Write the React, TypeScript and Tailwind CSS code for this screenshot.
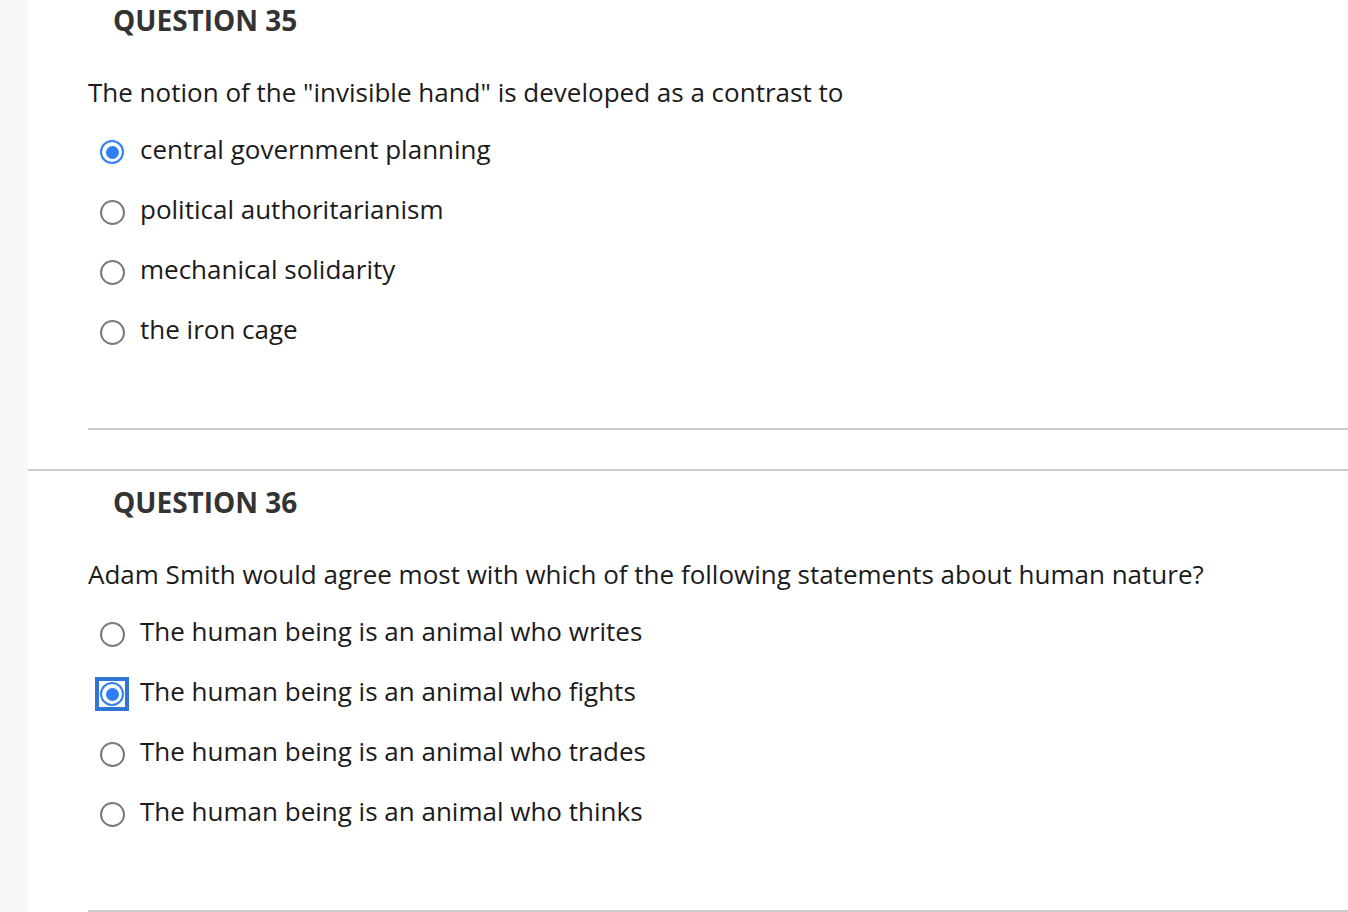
import React from "react";

type Opt = { label: string; checked?: boolean; focused?: boolean };

const Radio = ({ checked, focused }: { checked?: boolean; focused?: boolean }) => {
  const inner = checked ? (
    <span className="flex h-[24px] w-[24px] items-center justify-center rounded-full border-[2px] border-[#2f7ef6] bg-white">
      <span className="h-[13px] w-[13px] rounded-full bg-[#2f7ef6]" />
    </span>
  ) : (
    <span className="block h-[25px] w-[25px] rounded-full border-[2px] border-[#7a7a7a] bg-white" />
  );
  if (focused) {
    return (
      <span className="mt-[6px] flex h-[34px] w-[34px] items-center justify-center border-[4px] border-[#2f75d6] bg-white">
        {inner}
      </span>
    );
  }
  return <span className="mt-[6px] flex h-[34px] w-[34px] items-center justify-center">{inner}</span>;
};

const Question = ({ num, text, options }: { num: number; text: string; options: Opt[] }) => (
  <section className="border-t-2 border-[#cdcdcd]">
    <h2 className="mt-[12px] pl-[85px] text-[28px] font-bold leading-[38px] text-[#333333]">
      QUESTION {num}
    </h2>
    <p className="mt-[34px] pl-[60px] text-[26px] leading-[38px] text-[#1b1b1b]">{text}</p>
    <ul className="mt-[8px]">
      {options.map((o) => (
        <li key={o.label} className="flex h-[60px] items-center pl-[67px]">
          <Radio checked={o.checked} focused={o.focused} />
          <span className="ml-[11px] text-[26px] leading-[38px] text-[#1b1b1b]">{o.label}</span>
        </li>
      ))}
    </ul>
    <div className="ml-[60px] mt-[69px] h-[2px] bg-[#cdcdcd]" />
    <div className="h-[39px]" />
  </section>
);

export default function App() {
  return (
    <div
      className="flex h-[912px] w-[1348px] overflow-hidden bg-white"
      style={{ fontFamily: '"Open Sans", "Liberation Sans", sans-serif' }}
    >
      <div className="w-[28px] shrink-0 bg-[#f8f8f8]" />
      <main className="flex-1 overflow-hidden">
        <div className="mt-[-13px]">
          <Question
            num={35}
            text={'The notion of the "invisible hand" is developed as a contrast to'}
            options={[
              { label: "central government planning", checked: true },
              { label: "political authoritarianism" },
              { label: "mechanical solidarity" },
              { label: "the iron cage" },
            ]}
          />
          <Question
            num={36}
            text="Adam Smith would agree most with which of the following statements about human nature?"
            options={[
              { label: "The human being is an animal who writes" },
              { label: "The human being is an animal who fights", checked: true, focused: true },
              { label: "The human being is an animal who trades" },
              { label: "The human being is an animal who thinks" },
            ]}
          />
        </div>
      </main>
    </div>
  );
}
